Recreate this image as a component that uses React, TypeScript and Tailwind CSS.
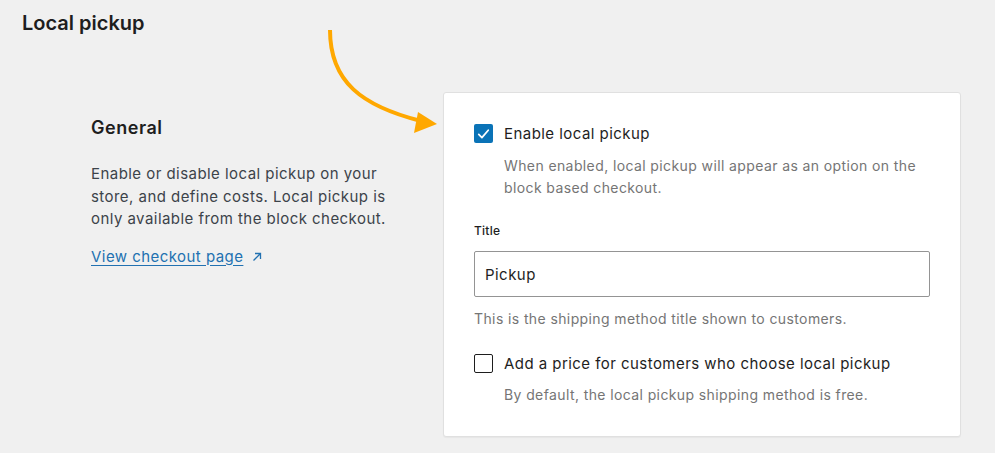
import React, { useState } from 'react';

const CheckIcon = () => (
  <svg viewBox="0 0 24 24" className="h-[20px] w-[20px]" fill="none">
    <path d="M6 12.6l4 4 8-9.4" stroke="#fff" strokeWidth="2.2" strokeLinecap="round" strokeLinejoin="round" />
  </svg>
);

const Checkbox = ({ checked, onChange }: { checked: boolean; onChange: () => void }) => (
  <button
    type="button"
    onClick={onChange}
    aria-pressed={checked}
    className={`flex h-[19px] w-[19px] shrink-0 items-center justify-center rounded-[2px] ${
      checked ? 'bg-[#0a73b7]' : 'border border-[#1e1e1e] bg-white'
    }`}
  >
    {checked && <CheckIcon />}
  </button>
);

const Arrow = () => (
  <svg className="pointer-events-none absolute left-0 top-0" width="460" height="150" viewBox="0 0 460 150" fill="none">
    <path d="M330 30 C 330 82, 362 106, 421 121" stroke="#ffa800" strokeWidth="4" fill="none" />
    <polygon points="437,124 418,112 414,133" fill="#ffa800" />
  </svg>
);

const ExternalIcon = () => (
  <svg viewBox="0 0 12 12" className="h-[12px] w-[12px]" fill="none">
    <path d="M2.5 9.5l7-7M4 2.5h5.5V8" stroke="#2271b1" strokeWidth="1.3" />
  </svg>
);

export default function App() {
  const [enabled, setEnabled] = useState(true);
  const [addPrice, setAddPrice] = useState(false);
  const [title, setTitle] = useState('Pickup');

  return (
    <div className="relative min-h-[453px] w-full bg-[#f0f0f0] font-['Inter',sans-serif] text-[#1e1e1e]">
      <Arrow />
      <h1 className="pl-[22px] pt-[9px] text-[20px] font-semibold leading-[28px]">Local pickup</h1>

      <div className="mt-[55px] flex">
        <div className="ml-[91px] mt-[24px] w-[300px]">
          <h2 className="text-[18px] font-semibold leading-[24px] tracking-[0.03em]">General</h2>
          <p className="mt-[23px] text-[15px] leading-[22.5px] tracking-[0.03em] text-[#3c434a]">
            Enable or disable local pickup on your store, and define costs. Local pickup is only available from the
            block checkout.
          </p>
          <a href="#" className="mt-[15px] inline-flex items-center gap-[8px] text-[15px] leading-[22px] tracking-[0.03em] text-[#2271b1] underline underline-offset-[3px]">
            View checkout page
            <ExternalIcon />
          </a>
        </div>

        <div className="ml-[52px] w-[518px] rounded-[3px] border border-[#e0e0e0] bg-white px-[30px] pb-[30px] pt-[30px] shadow-[0_1px_1px_rgba(0,0,0,0.04)]">
          <div className="flex items-start gap-[11px]">
            <div className="pt-px">
              <Checkbox checked={enabled} onChange={() => setEnabled(!enabled)} />
            </div>
            <div>
              <div className="text-[15px] leading-[22px] tracking-[0.03em]">Enable local pickup</div>
              <p className="mt-[10px] text-[14px] leading-[22px] tracking-[0.028em] text-[#757575]">
                When enabled, local pickup will appear as an option on the block based checkout.
              </p>
            </div>
          </div>

          <label className="mt-[24px] block text-[12px] font-medium leading-[16px] tracking-[0.02em]">Title</label>
          <input
            value={title}
            onChange={(e) => setTitle(e.target.value)}
            className="mt-[12px] h-[46px] w-[456px] rounded-[2px] border border-[#949494] px-[10px] text-[15px] tracking-[0.03em] text-[#1e1e1e] outline-none"
          />
          <p className="mt-[11px] text-[14px] leading-[22px] tracking-[0.028em] text-[#757575]">This is the shipping method title shown to customers.</p>

          <div className="mt-[23px] flex items-start gap-[11px]">
            <div className="pt-px">
              <Checkbox checked={addPrice} onChange={() => setAddPrice(!addPrice)} />
            </div>
            <div>
              <div className="text-[15px] leading-[22px] tracking-[0.03em]">Add a price for customers who choose local pickup</div>
              <p className="mt-[9px] text-[14px] leading-[22px] tracking-[0.028em] text-[#757575]">By default, the local pickup shipping method is free.</p>
            </div>
          </div>
        </div>
      </div>
    </div>
  );
}
